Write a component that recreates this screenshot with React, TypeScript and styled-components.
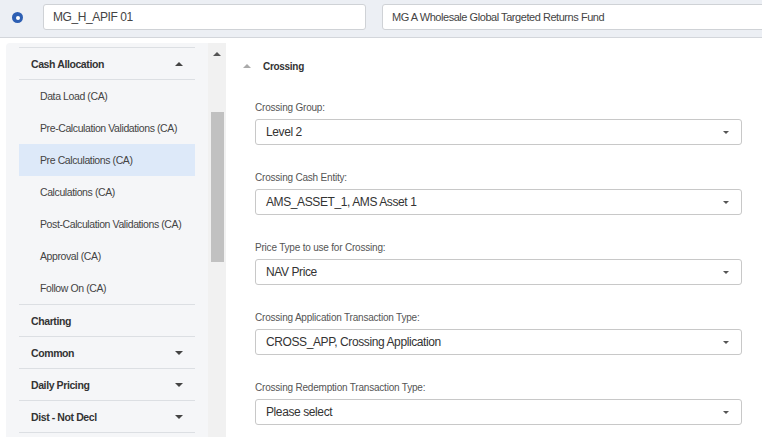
import React from 'react'
import styled, { createGlobalStyle } from 'styled-components'

const GlobalStyle = createGlobalStyle`
    html, body {
        margin: 0;
        padding: 0;
        background: #ffffff;
        font-family: "Liberation Sans", Arial, sans-serif;
        overflow: hidden;
    }
`

const Page = styled.div`
    width: 762px;
    height: 437px;
    display: flex;
    flex-direction: column;
    overflow: hidden;
`

const Header = styled.div`
    height: 38px;
    flex-shrink: 0;
    display: flex;
    align-items: flex-start;
    padding-top: 4px;
    box-sizing: border-box;
    background: #eceff4;
    border-bottom: 1px solid #d3d6db;
`

const Radio = styled.span`
    width: 11px;
    height: 11px;
    margin: 8px 20px 0 12px;
    border-radius: 50%;
    background: #2d5fb3;
    display: flex;
    align-items: center;
    justify-content: center;
    flex-shrink: 0;

    &::after {
        content: '';
        width: 4px;
        height: 4px;
        border-radius: 50%;
        background: #fff;
    }
`

const TextBox = styled.div<{ $width: number; $gap?: number; $size: number; $tracking: number }>`
    width: ${p => p.$width}px;
    height: 26px;
    flex-shrink: 0;
    margin-right: ${p => p.$gap ?? 0}px;
    box-sizing: border-box;
    background: #fff;
    border: 1px solid #cfd2d6;
    border-radius: 3px;
    padding: 0 9px;
    display: flex;
    align-items: center;
    font-size: ${p => p.$size}px;
    letter-spacing: ${p => p.$tracking}px;
    color: #444;
    white-space: nowrap;
`

const Body = styled.div`
    flex: 1;
    display: flex;
    padding-top: 5px;
    min-height: 0;
`

const Sidebar = styled.div`
    width: 202px;
    margin-left: 6px;
    background: #f5f6f8;
    border-top-left-radius: 4px;
    padding: 4px 13px 0;
    box-sizing: border-box;
    overflow: hidden;
`

const Menu = styled.div`
    border-top: 1px solid #dcdfe3;
`

const Section = styled.div`
    border-bottom: 1px solid #dcdfe3;
`

const SectionTitle = styled.div`
    height: 31px;
    display: flex;
    align-items: center;
    justify-content: space-between;
    padding: 0 12px;
    font-size: 10.5px;
    letter-spacing: -0.4px;
    font-weight: bold;
    color: #333;
`

const SubList = styled.div`
    border-top: 1px solid #dcdfe3;
`

const SubItem = styled.div<{ $active?: boolean }>`
    height: 32px;
    display: flex;
    align-items: center;
    padding-left: 21px;
    font-size: 10.5px;
    letter-spacing: -0.4px;
    white-space: nowrap;
    color: #444;
    background: ${p => (p.$active ? '#dde9f9' : 'transparent')};
`

const Caret = styled.span<{ $up?: boolean; $color?: string; $size?: number }>`
    width: 0;
    height: 0;
    border-left: ${p => p.$size ?? 4}px solid transparent;
    border-right: ${p => p.$size ?? 4}px solid transparent;
    ${p =>
        p.$up
            ? `border-bottom: ${p.$size ?? 4}px solid ${p.$color ?? '#444'};`
            : `border-top: ${p.$size ?? 4}px solid ${p.$color ?? '#444'};`}
`

const Scrollbar = styled.div`
    width: 18px;
    background: #f1f1f1;
    display: flex;
    flex-direction: column;
    align-items: center;
    padding-top: 9px;
    box-sizing: border-box;
`

const Thumb = styled.div`
    width: 13px;
    height: 150px;
    margin-top: 56px;
    background: #c1c1c1;
`

const Main = styled.div`
    flex: 1;
    padding: 16px 20px 0 17px;
    min-width: 0;
`

const PanelHeader = styled.div`
    display: flex;
    align-items: center;
    gap: 12px;
    font-size: 10px;
    letter-spacing: -0.3px;
    font-weight: bold;
    color: #333;
    height: 14px;
`

const Fields = styled.div`
    padding: 29px 0 0 12px;
    display: flex;
    flex-direction: column;
    gap: 27px;
`

const Field = styled.div`
    display: flex;
    flex-direction: column;
    gap: 5px;
`

const Label = styled.div`
    font-size: 10px;
    letter-spacing: -0.2px;
    color: #555;
    height: 12px;
    line-height: 12px;
`

const Select = styled.div`
    height: 26px;
    box-sizing: border-box;
    border: 1px solid #c8c8c8;
    border-radius: 3px;
    background: #fff;
    display: flex;
    align-items: center;
    justify-content: space-between;
    padding: 0 12px 0 10px;
    font-size: 12px;
    letter-spacing: -0.4px;
    color: #333;
`

const subItems = [
    'Data Load (CA)',
    'Pre-Calculation Validations (CA)',
    'Pre Calculations (CA)',
    'Calculations (CA)',
    'Post-Calculation Validations (CA)',
    'Approval (CA)',
    'Follow On (CA)',
]

const otherSections = [
    { title: 'Charting', caret: false },
    { title: 'Common', caret: true },
    { title: 'Daily Pricing', caret: true },
    { title: 'Dist - Not Decl', caret: true },
]

const fields = [
    { label: 'Crossing Group:', value: 'Level 2' },
    { label: 'Crossing Cash Entity:', value: 'AMS_ASSET_1, AMS Asset 1' },
    { label: 'Price Type to use for Crossing:', value: 'NAV Price' },
    { label: 'Crossing Application Transaction Type:', value: 'CROSS_APP, Crossing Application' },
    { label: 'Crossing Redemption Transaction Type:', value: 'Please select' },
]

const App = () => {
    return (
        <Page>
            <GlobalStyle />
            <Header>
                <Radio />
                <TextBox $width={323} $gap={16} $size={12} $tracking={-0.4}>MG_H_APIF 01</TextBox>
                <TextBox $width={400} $size={11} $tracking={-0.45}>MG A Wholesale Global Targeted Returns Fund</TextBox>
            </Header>
            <Body>
                <Sidebar>
                    <Menu>
                        <Section>
                            <SectionTitle>
                                Cash Allocation
                                <Caret $up />
                            </SectionTitle>
                            <SubList>
                                {subItems.map(item => (
                                    <SubItem key={item} $active={item === 'Pre Calculations (CA)'}>
                                        {item}
                                    </SubItem>
                                ))}
                            </SubList>
                        </Section>
                        {otherSections.map(s => (
                            <Section key={s.title}>
                                <SectionTitle>
                                    {s.title}
                                    {s.caret && <Caret />}
                                </SectionTitle>
                            </Section>
                        ))}
                    </Menu>
                </Sidebar>
                <Scrollbar>
                    <Caret $up $color="#555" />
                    <Thumb />
                </Scrollbar>
                <Main>
                    <PanelHeader>
                        <Caret $up $color="#aaa" />
                        Crossing
                    </PanelHeader>
                    <Fields>
                        {fields.map(f => (
                            <Field key={f.label}>
                                <Label>{f.label}</Label>
                                <Select>
                                    {f.value}
                                    <Caret $color="#555" $size={3} />
                                </Select>
                            </Field>
                        ))}
                    </Fields>
                </Main>
            </Body>
        </Page>
    )
}

export default App
